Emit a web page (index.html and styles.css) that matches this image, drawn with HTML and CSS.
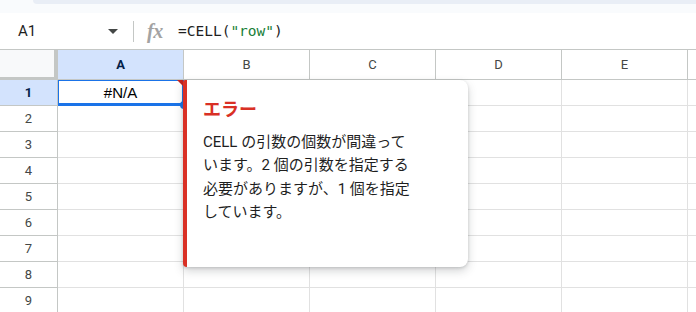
FILE: index.html
```html
<!DOCTYPE html>
<html lang="ja">
<head>
<meta charset="utf-8">
<link rel="stylesheet" href="styles.css">
</head>
<body>
<div class="app">
  <div class="top-edge"><div class="toolbar-tail"></div></div>
  <div class="formula-bar">
    <div class="name-box">A1</div>
    <div class="name-arrow"></div>
    <div class="fb-sep"></div>
    <div class="fx">fx</div>
    <div class="formula">=CELL(<span class="str">"row"</span>)</div>
  </div>
  <div class="sheet">
    <div class="corner"></div>
    <div class="col-h sel">A</div>
    <div class="col-h">B</div>
    <div class="col-h">C</div>
    <div class="col-h">D</div>
    <div class="col-h">E</div>
    <div class="col-h rest"></div>

    <div class="row-h sel">1</div>
    <div class="cell active">#N/A<span class="err-mark"></span><span class="handle"></span></div>
    <div class="cell"></div><div class="cell"></div><div class="cell"></div><div class="cell"></div><div class="cell rest"></div>

    <div class="row-h">2</div>
    <div class="cell"></div><div class="cell"></div><div class="cell"></div><div class="cell"></div><div class="cell"></div><div class="cell rest"></div>
    <div class="row-h">3</div>
    <div class="cell"></div><div class="cell"></div><div class="cell"></div><div class="cell"></div><div class="cell"></div><div class="cell rest"></div>
    <div class="row-h">4</div>
    <div class="cell"></div><div class="cell"></div><div class="cell"></div><div class="cell"></div><div class="cell"></div><div class="cell rest"></div>
    <div class="row-h">5</div>
    <div class="cell"></div><div class="cell"></div><div class="cell"></div><div class="cell"></div><div class="cell"></div><div class="cell rest"></div>
    <div class="row-h">6</div>
    <div class="cell"></div><div class="cell"></div><div class="cell"></div><div class="cell"></div><div class="cell"></div><div class="cell rest"></div>
    <div class="row-h">7</div>
    <div class="cell"></div><div class="cell"></div><div class="cell"></div><div class="cell"></div><div class="cell"></div><div class="cell rest"></div>
    <div class="row-h">8</div>
    <div class="cell"></div><div class="cell"></div><div class="cell"></div><div class="cell"></div><div class="cell"></div><div class="cell rest"></div>
    <div class="row-h">9</div>
    <div class="cell"></div><div class="cell"></div><div class="cell"></div><div class="cell"></div><div class="cell"></div><div class="cell rest"></div>
  </div>

  <div class="tooltip">
    <div class="tip-title">エラー</div>
    <div class="tip-body">CELL の引数の個数が間違って<br>います。2 個の引数を指定する<br>必要がありますが、1 個を指定<br>しています。</div>
  </div>
</div>
</body>
</html>
```

FILE: styles.css
```css
* { box-sizing: border-box; }
html, body { margin: 0; padding: 0; background: #fff; }
body { width: 696px; height: 312px; overflow: hidden; font-family: Roboto, "Noto Sans CJK JP", sans-serif; color: #1f1f1f; }

.app { position: relative; width: 696px; height: 312px; }

.top-edge { height: 13px; background: #f9fbfd; }
.toolbar-tail { margin-left: 33px; height: 4px; background: #e9eef6; border-bottom-left-radius: 6px; }

.formula-bar { height: 36px; display: flex; align-items: center; background: #fff; }
.name-box { width: 90px; padding-left: 18px; font-size: 15px; color: #1f1f1f; }
.name-arrow { width: 0; height: 0; border-left: 5px solid transparent; border-right: 5px solid transparent; border-top: 5px solid #444746; margin-left: 18px; }
.fb-sep { width: 1px; height: 21px; background: #c4c7c5; margin-left: 15px; }
.fx { margin-left: 13px; font-family: "Liberation Serif", serif; font-style: italic; font-weight: 700; font-size: 20px; color: #a3a3a3; letter-spacing: -0.5px; width: 18px; }
.formula { margin-left: 13px; font-family: "DejaVu Sans Mono", monospace; font-size: 14.5px; color: #1f1f1f; }
.str { color: #188038; }

.sheet { display: grid; grid-template-columns: 58px repeat(5, 126px) 1fr; grid-auto-rows: 26px; grid-template-rows: 30px; border-top: 1px solid #c4c7c5; }

.corner { background: #f8f9fa; border-right: 4px solid #c4c7c5; border-bottom: 3px solid #c4c7c5; }
.col-h { display: flex; align-items: center; justify-content: center; font-size: 13px; color: #444746; border-right: 1px solid #c4c7c5; border-bottom: 1px solid #c4c7c5; background: #fff; }
.col-h.sel { background: #d3e3fd; color: #041e49; font-weight: 700; }
.col-h.rest { border-right: none; }

.row-h { display: flex; align-items: center; justify-content: center; font-size: 13px; color: #444746; border-right: 1px solid #c4c7c5; border-bottom: 1px solid #c4c7c5; background: #fff; }
.row-h.sel { background: #d3e3fd; color: #041e49; font-weight: 700; }

.cell { border-right: 1px solid #e1e1e1; border-bottom: 1px solid #e1e1e1; position: relative; }
.cell.rest { border-right: none; }
.cell.active { display: flex; align-items: center; justify-content: center; font-family: "Liberation Sans", Arial, sans-serif; font-size: 15px; color: #000; box-shadow: inset 0 0 0 1px #1a73e8; border-bottom: 2px solid #1a73e8; border-right-color: #1a73e8; }
.err-mark { position: absolute; right: 0; top: 0; width: 0; height: 0; border-top: 6px solid #c5221f; border-left: 6px solid transparent; }
.handle { position: absolute; right: -5px; bottom: -5px; width: 8px; height: 8px; border-radius: 50%; background: #1a73e8; }

.tooltip { position: absolute; left: 183px; top: 80px; width: 285px; height: 187px; background: #fff; border-left: 4px solid #d93025; border-radius: 2px 8px 8px 4px; box-shadow: 0 4px 10px rgba(60,64,67,0.22), 0 1px 3px rgba(60,64,67,0.2); padding: 15px 16px 0 16px; }
.tip-title { font-family: "Noto Sans CJK JP", sans-serif; font-weight: 700; font-size: 18px; line-height: 26px; color: #d93025; }
.tip-body { margin-top: 10px; font-family: Roboto, "Noto Sans CJK JP", sans-serif; font-size: 15px; line-height: 23.4px; color: #1f1f1f; white-space: nowrap; }
```
